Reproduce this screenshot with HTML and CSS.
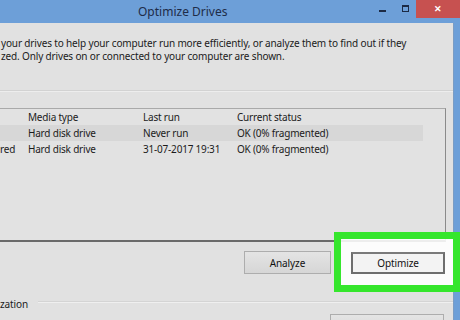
FILE: index.html
```html
<!DOCTYPE html>
<html>
<head>
<meta charset="utf-8">
<link rel="stylesheet" href="styles.css">
</head>
<body>
<div class="window">
  <div class="titlebar">
    <span class="title">Optimize Drives</span>
    <div class="controls">
      <span class="ctl min"><i></i></span>
      <span class="ctl max"><i></i></span>
      <span class="ctl close">&#x2715;</span>
    </div>
  </div>
  <div class="frame">
    <div class="client">
      <p class="desc">your drives to help your computer run more efficiently, or analyze them to find out if they<br>zed. Only drives on or connected to your computer are shown.</p>
      <div class="sep"></div>
      <div class="list">
        <div class="row head">
          <span></span><span>Media type</span><span>Last run</span><span>Current status</span>
        </div>
        <div class="row sel">
          <span></span><span>Hard disk drive</span><span>Never run</span><span>OK (0% fragmented)</span>
        </div>
        <div class="row">
          <span class="cut">red</span><span>Hard disk drive</span><span>31-07-2017 19:31</span><span>OK (0% fragmented)</span>
        </div>
      </div>
      <div class="actions">
        <button class="btn analyze">Analyze</button>
        <button class="btn optimize">Optimize</button>
      </div>
      <div class="group">
        <span class="group-label">zation</span>
        <span class="group-line"></span>
      </div>
      <div class="bottom-actions">
        <button class="btn change"></button>
      </div>
    </div>
    <div class="edge"></div>
  </div>
  <div class="highlight"></div>
</div>
</body>
</html>
```
FILE: styles.css
```css
* { box-sizing: border-box; }
html, body { margin: 0; padding: 0; }
body {
  width: 460px;
  height: 320px;
  overflow: hidden;
  background: #e1e1e1;
  font-family: "Noto Sans", "Open Sans", sans-serif;
  color: #1b1b1b;
}
.window { position: relative; width: 460px; height: 320px; overflow: hidden; display: flex; flex-direction: column; }
.titlebar {
  height: 23px;
  background: #6d9fd8;
  display: flex;
  align-items: flex-start;
  flex: none;
}
.title {
  margin-left: 138px;
  margin-top: 4px;
  font-size: 12px;
  line-height: 16px;
  color: #1e2c48;
}
.controls { margin-left: auto; display: flex; align-items: flex-start; height: 18px; }
.ctl { display: flex; justify-content: center; }
.min { width: 22px; padding-top: 10px; }
.min i { display: block; width: 7px; height: 2px; background: #1c2a44; }
.max { width: 22px; padding-top: 5px; margin-left: 1px; }
.max i { display: block; width: 7px; height: 7px; border: 1px solid #1c2a44; border-top-width: 2px; }
.close {
  width: 44px;
  height: 18px;
  background: #c75150;
  color: #fff;
  font-size: 9px;
  line-height: 18px;
  font-weight: bold;
}
.frame { flex: 1; display: flex; min-height: 0; }
.client { width: 453px; padding-top: 14px; font-size: 10px; overflow: hidden; display: flex; flex-direction: column; }
.edge { flex: 1; background: #6d9fd8; border-left: 1px solid #7a9cc4; }
.desc {
  margin: 0;
  padding-left: 1px;
  font-size: 10px;
  letter-spacing: -0.15px;
  line-height: 13px;
  white-space: nowrap;
}
.sep {
  margin-top: 27px;
  height: 2px;
  flex: none;
  border-top: 1px solid #d2d2d2;
  border-bottom: 1px solid #ededed;
}
.list {
  margin-top: 16px;
  width: 446px;
  height: 134px;
  flex: none;
  border-top: 1px solid #a9a9a9;
  border-right: 1px solid #8a8a8a;
  border-bottom: 2px solid #6a6a6a;
  background: #e2e2e2;
}
.row {
  display: grid;
  grid-template-columns: 28px 115px 94px 1fr;
  height: 16px;
  align-items: center;
  font-size: 10px;
  letter-spacing: -0.2px;
  line-height: 16px;
  width: 423px;
  white-space: nowrap;
}
.row.sel { background: #d7d7d7; }
.cut { overflow: hidden; }
.actions {
  margin-top: 9px;
  display: flex;
  flex: none;
  justify-content: flex-end;
  gap: 20px;
  padding-right: 8px;
}
.btn {
  font-family: inherit;
  font-size: 10px;
  letter-spacing: -0.1px;
  color: #111;
  height: 23px;
  padding: 0;
}
.analyze {
  width: 87px;
  background: linear-gradient(#e4e4e4, #d6d6d6);
  border: 1px solid #adadad;
}
.optimize {
  position: relative;
  z-index: 2;
  width: 94px;
  height: 22px;
  margin-top: 1px;
  background: #f3f3f3;
  border: 2px solid #6e6e6e;
  border-top-color: #7a7a7a;
}
.group {
  margin-top: 23px;
  display: flex;
  flex: none;
  align-items: center;
  height: 14px;
}
.group-label { font-size: 10px; letter-spacing: -0.1px; line-height: 14px; padding-right: 10px; }
.group-line {
  flex: 1;
  height: 2px;
  margin-top: -4px;
  border-top: 1px solid #d4d4d4;
  border-bottom: 1px solid #efefef;
}
.bottom-actions {
  flex: 1;
  min-height: 0;
  overflow: hidden;
  display: flex;
  align-items: flex-start;
  justify-content: flex-end;
  padding-right: 9px;
  padding-top: 3px;
}
.change {
  width: 114px;
  height: 23px;
  flex: none;
  background: linear-gradient(#e4e4e4, #d6d6d6);
  border: 1px solid #adadad;
}
.highlight {
  position: absolute;
  left: 334px;
  top: 232px;
  width: 126px;
  height: 60px;
  border: 7px solid #35e62c;
  background: rgba(255, 255, 255, 0.88);
  z-index: 1;
}
```
